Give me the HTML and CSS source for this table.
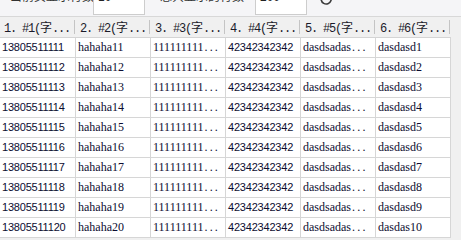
FILE: index.html
```html
<!DOCTYPE html>
<html>
<head>
<meta charset="utf-8">
<link rel="stylesheet" href="styles.css">
</head>
<body>
<div class="toolbar">
  <span class="label lbl1">当前页显示行数</span>
  <span class="input">10</span>
  <span class="label lbl2">总共显示的行数</span>
  <span class="input">200</span>
  <svg class="refresh" width="14" height="14" viewBox="0 0 14 14"><path d="M11.5 4.5A5 5 0 1 1 7 2" fill="none" stroke="#3a3a3a" stroke-width="1.6"/></svg>
</div>
<div class="grid">
  <div class="hcell"><span class="htext">1. #1(<span class="cjk">字</span>...</span><i class="sep"></i></div>
  <div class="hcell"><span class="htext">2. #2(<span class="cjk">字</span>...</span><i class="sep"></i></div>
  <div class="hcell"><span class="htext">3. #3(<span class="cjk">字</span>...</span><i class="sep"></i></div>
  <div class="hcell"><span class="htext">4. #4(<span class="cjk">字</span>...</span><i class="sep"></i></div>
  <div class="hcell"><span class="htext">5. #5(<span class="cjk">字</span>...</span><i class="sep"></i></div>
  <div class="hcell"><span class="htext">6. #6(<span class="cjk">字</span>...</span><i class="sep"></i></div>

  <div class="cell num">13805511111</div><div class="cell">hahaha11</div><div class="cell">111111111<span class="dots">...</span></div><div class="cell num">42342342342</div><div class="cell">dasdsadas<span class="dots">...</span></div><div class="cell">dasdasd1</div>
  <div class="cell num">13805511112</div><div class="cell">hahaha12</div><div class="cell">111111111<span class="dots">...</span></div><div class="cell num">42342342342</div><div class="cell">dasdsadas<span class="dots">...</span></div><div class="cell">dasdasd2</div>
  <div class="cell num">13805511113</div><div class="cell">hahaha13</div><div class="cell">111111111<span class="dots">...</span></div><div class="cell num">42342342342</div><div class="cell">dasdsadas<span class="dots">...</span></div><div class="cell">dasdasd3</div>
  <div class="cell num">13805511114</div><div class="cell">hahaha14</div><div class="cell">111111111<span class="dots">...</span></div><div class="cell num">42342342342</div><div class="cell">dasdsadas<span class="dots">...</span></div><div class="cell">dasdasd4</div>
  <div class="cell num">13805511115</div><div class="cell">hahaha15</div><div class="cell">111111111<span class="dots">...</span></div><div class="cell num">42342342342</div><div class="cell">dasdsadas<span class="dots">...</span></div><div class="cell">dasdasd5</div>
  <div class="cell num">13805511116</div><div class="cell">hahaha16</div><div class="cell">111111111<span class="dots">...</span></div><div class="cell num">42342342342</div><div class="cell">dasdsadas<span class="dots">...</span></div><div class="cell">dasdasd6</div>
  <div class="cell num">13805511117</div><div class="cell">hahaha17</div><div class="cell">111111111<span class="dots">...</span></div><div class="cell num">42342342342</div><div class="cell">dasdsadas<span class="dots">...</span></div><div class="cell">dasdasd7</div>
  <div class="cell num">13805511118</div><div class="cell">hahaha18</div><div class="cell">111111111<span class="dots">...</span></div><div class="cell num">42342342342</div><div class="cell">dasdsadas<span class="dots">...</span></div><div class="cell">dasdasd8</div>
  <div class="cell num">13805511119</div><div class="cell">hahaha19</div><div class="cell">111111111<span class="dots">...</span></div><div class="cell num">42342342342</div><div class="cell">dasdsadas<span class="dots">...</span></div><div class="cell">dasdasd9</div>
  <div class="cell num">13805511120</div><div class="cell">hahaha20</div><div class="cell">111111111<span class="dots">...</span></div><div class="cell num">42342342342</div><div class="cell">dasdsadas<span class="dots">...</span></div><div class="cell">dasdas10</div>
</div>
</body>
</html>
```
FILE: styles.css
```css
html, body {
  margin: 0;
  padding: 0;
  background: #f0f0f0;
  overflow: hidden;
}

.toolbar {
  display: flex;
  align-items: center;
  height: 40px;
  margin-top: -24px;
  padding-left: 10px;
  background: #f5f5f7;
  border-bottom: 1px solid #d8d8d8;
  font-family: "Noto Sans CJK SC", sans-serif;
  font-size: 12px;
  color: #333;
}

.label {
  white-space: nowrap;
  overflow: hidden;
  margin-top: -2px;
}

.lbl1 {
  width: 83px;
}

.lbl2 {
  width: 95px;
  margin-left: 15px;
}

.input {
  align-self: flex-start;
  box-sizing: border-box;
  width: 52px;
  height: 39px;
  padding-left: 4px;
  padding-top: 2px;
  display: flex;
  align-items: center;
  background: #fff;
  border: 1px solid #cdcdcd;
  font-family: "Liberation Sans", sans-serif;
  color: #222;
}

.refresh {
  align-self: flex-start;
  margin-left: 12px;
  margin-top: 16px;
}

.grid {
  display: grid;
  grid-template-columns: 76px repeat(5, 75px);
  width: 451px;
  font-family: "Liberation Serif", serif;
  font-size: 12px;
  color: #0c0c30;
}

.hcell {
  display: flex;
  align-items: center;
  box-sizing: border-box;
  height: 21px;
  padding-left: 4px;
  background: #f0f0f0;
  border-bottom: 1px solid #d4d4d4;
  font-family: "Liberation Mono", monospace;
  letter-spacing: -1.2px;
}

.htext {
  flex: 1;
  white-space: nowrap;
  overflow: hidden;
  color: #1a1a2a;
}

.cjk {
  font-family: "Noto Sans CJK SC", sans-serif;
  letter-spacing: 0;
  font-size: 12px;
}

.sep {
  width: 1px;
  height: 14px;
  margin-right: 1px;
  background: #c4c4c4;
}

.cell {
  box-sizing: border-box;
  height: 20px;
  padding-left: 2px;
  line-height: 19px;
  background: #fff;
  border-right: 1px solid #d6d6d6;
  border-bottom: 1px solid #d6d6d6;
  white-space: nowrap;
  overflow: hidden;
}

.dots {
  letter-spacing: 2.2px;
  margin-left: 1px;
}

.num {
  font-family: "Liberation Sans", sans-serif;
  font-size: 11px;
  letter-spacing: -0.2px;
}
```
